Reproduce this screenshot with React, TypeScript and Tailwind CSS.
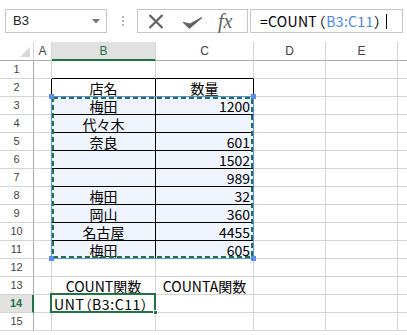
import React from 'react';

type Cell = { text?: string; align?: 'left' | 'center' | 'right' };

const COLS = ['A', 'B', 'C', 'D', 'E', 'F'];

const DATA: Record<string, Cell> = {
  B2: { text: '店名', align: 'center' },
  C2: { text: '数量', align: 'center' },
  B3: { text: '梅田', align: 'center' },
  C3: { text: '1200', align: 'right' },
  B4: { text: '代々木', align: 'center' },
  B5: { text: '奈良', align: 'center' },
  C5: { text: '601', align: 'right' },
  C6: { text: '1502', align: 'right' },
  C7: { text: '989', align: 'right' },
  B8: { text: '梅田', align: 'center' },
  C8: { text: '32', align: 'right' },
  B9: { text: '岡山', align: 'center' },
  C9: { text: '360', align: 'right' },
  B10: { text: '名古屋', align: 'center' },
  C10: { text: '4455', align: 'right' },
  B11: { text: '梅田', align: 'center' },
  C11: { text: '605', align: 'right' },
  B13: { text: 'COUNT関数', align: 'center' },
  C13: { text: 'COUNTA関数', align: 'center' },
  B14: { text: 'UNT（B3:C11）', align: 'left' },
};

const ROWS = Array.from({ length: 15 }, (_, i) => i + 1);

const inRange = (col: string, row: number) => (col === 'B' || col === 'C') && row >= 3 && row <= 11;

function cellClass(col: string, row: number) {
  // table edges are black: A|B, B|C, C|D from row 2 to 11, and rows 1-11 bottoms under B/C
  const blackRight = row >= 2 && row <= 11 && (col === 'A' || col === 'B' || col === 'C');
  const blackBottom = (col === 'B' || col === 'C') && row >= 1 && row <= 11;
  const r = blackRight ? 'border-r-black' : 'border-r-[#d4d4d4]';
  const b = blackBottom ? 'border-b-black' : 'border-b-[#d4d4d4]';
  const bg = inRange(col, row) ? 'bg-[#eef3fc]' : 'bg-white';
  return `${r} ${b} ${bg}`;
}

const Toolbar = () => (
  <div className="flex h-[42px] items-start bg-white pl-[5px] pt-[9px]">
    <div className="relative flex h-[24px] w-[102px] items-center border border-[#c6c6c6] bg-white pl-[7px] text-[13px] text-[#222] [font-family:'Liberation_Sans',sans-serif]">
      B3
      <svg className="absolute right-[6px] top-[9px]" width="8" height="5" viewBox="0 0 8 5">
        <path d="M0 0h8L4 4.5z" fill="#777" />
      </svg>
    </div>
    <div className="ml-[15px] mt-[7px] flex flex-col gap-[2px]">
      <span className="block h-[2px] w-[2px] bg-[#b5b5b5]" />
      <span className="block h-[2px] w-[2px] bg-[#b5b5b5]" />
      <span className="block h-[2px] w-[2px] bg-[#b5b5b5]" />
    </div>
    <div className="ml-[13px] flex h-[24px] w-[111px] items-center border border-[#c6c6c6] bg-white">
      <svg className="ml-[10px]" width="16" height="15" viewBox="0 0 16 15">
        <path d="M1.5 1 L14.5 14 M14.5 1 L1.5 14" stroke="#626262" strokeWidth="2.2" fill="none" />
      </svg>
      <svg className="ml-[19px] mt-[3px]" width="19" height="12" viewBox="0 0 19 12">
        <path d="M0.5 5.5 L6.5 11 L18.5 0.8 L6.8 7.2 Z" fill="#626262" stroke="#626262" strokeWidth="1.2" strokeLinejoin="round" />
      </svg>
      <span className="ml-[16px] text-[20px] italic leading-none text-[#626262] [font-family:'Liberation_Serif',serif]">
        fx
      </span>
    </div>
    <div className="ml-[2px] flex h-[24px] w-[153px] items-center border border-[#c6c6c6] bg-white pl-[9px] text-[14px] tracking-[0.3px] text-black [font-family:'Noto_Sans_CJK_JP',sans-serif] [font-feature-settings:'palt']">
      <span>=COUNT</span>
      <span className="mx-px">（</span>
      <span className="text-[#4f86e0]">B3:C11</span>
      <span className="mx-px">）</span>
      <span className="ml-[3px] inline-block h-[15px] w-px bg-black" />
    </div>
  </div>
);

const HeaderRow = () => (
  <>
    <div className="relative h-[19px] border-b border-r border-b-[#ababab] border-r-[#d4d4d4] bg-white">
      <svg className="absolute left-[20px] top-[5px]" width="10" height="10" viewBox="0 0 10 10">
        <path d="M10 0 V10 H0 Z" fill="#d8d8d8" />
      </svg>
    </div>
    {COLS.map((c) => {
      const active = c === 'B';
      return (
        <div
          key={c}
          className={`flex h-[19px] items-center justify-center border-r border-r-[#d4d4d4] text-[12px] [font-family:'Liberation_Sans',sans-serif] ${
            active
              ? 'border-b-2 border-b-[#217346] bg-[#e1e1e1] text-[#217346]'
              : 'border-b border-b-[#ababab] bg-white text-[#444]'
          }`}
        >
          {c === 'F' ? '' : c}
        </div>
      );
    })}
  </>
);

export default function App() {
  return (
    <div className="h-[335px] w-[407px] overflow-hidden bg-white">
      <Toolbar />
      <div className="relative grid grid-cols-[34px_18px_104px_98px_72px_72px_72px]">
        <HeaderRow />
        {ROWS.map((row) => (
          <React.Fragment key={row}>
            <div
              className={`flex h-[18px] items-center justify-center text-[11px] [font-family:'Liberation_Sans',sans-serif] ${
                row === 14
                  ? 'border-b border-r-2 border-b-[#d4d4d4] border-r-[#217346] bg-[#e1e1e1] font-bold text-[#217346]'
                  : 'border-b border-r border-b-[#d4d4d4] border-r-[#ababab] bg-white text-[#444]'
              }`}
            >
              {row}
            </div>
            {COLS.map((col) => {
              const cell = DATA[`${col}${row}`];
              const align =
                cell?.align === 'right'
                  ? 'justify-end pr-[3px]'
                  : cell?.align === 'center'
                  ? 'justify-center'
                  : 'justify-start pl-[2px] tracking-[0.6px] [font-feature-settings:"palt"]';
              return (
                <div
                  key={col}
                  className={`flex h-[18px] overflow-visible whitespace-nowrap border-b border-r pt-[2px] text-[14px] leading-[15px] text-black [font-family:'Noto_Sans_CJK_JP',sans-serif] ${align} ${cellClass(
                    col,
                    row
                  )}`}
                >
                  {cell?.text}
                </div>
              );
            })}
          </React.Fragment>
        ))}

        {/* reference highlight, copy marquee and active cell */}
        <svg className="pointer-events-none absolute left-0 top-0" width="407" height="293" viewBox="0 0 407 293">
          <rect x="51.5" y="54.5" width="202" height="162" fill="none" stroke="#5a8ee8" strokeWidth="1" />
          <rect x="53" y="56" width="199" height="159" fill="none" stroke="#217346" strokeWidth="2" strokeDasharray="5 3" />
          <rect x="49" y="52" width="5" height="5" fill="#5a8ee8" />
          <rect x="251" y="52" width="5" height="5" fill="#5a8ee8" />
          <rect x="49" y="214" width="5" height="5" fill="#5a8ee8" />
          <rect x="251" y="214" width="5" height="5" fill="#5a8ee8" />
          <rect x="51" y="252" width="104" height="18" fill="none" stroke="#217346" strokeWidth="2" />
          <rect x="153.5" y="268.5" width="4" height="4" fill="#217346" stroke="#fff" strokeWidth="1" />
        </svg>
      </div>
    </div>
  );
}
